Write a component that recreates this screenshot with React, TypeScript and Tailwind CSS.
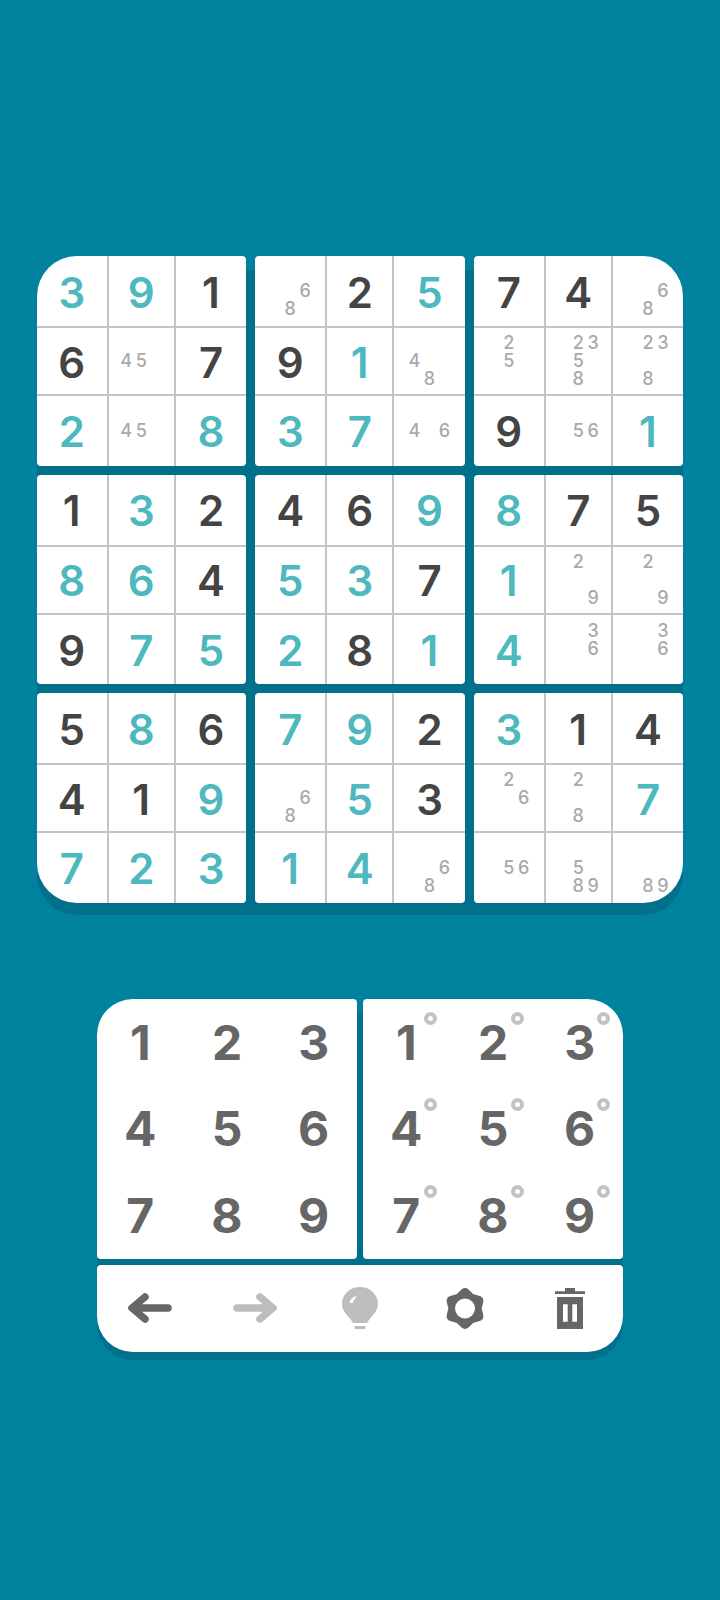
const boxes = [
  ["3t", "9t", "1", "6", "n45", "7", "2t", "n45", "8t"],
  ["n68", "2", "5t", "9", "1t", "n48", "3t", "7t", "n46"],
  ["7", "4", "n68", "n25", "n2358", "n238", "9", "n56", "1t"],
  ["1", "3t", "2", "8t", "6t", "4", "9", "7t", "5t"],
  ["4", "6", "9t", "5t", "3t", "7", "2t", "8", "1t"],
  ["8t", "7", "5", "1t", "n29", "n29", "4t", "n36", "n36"],
  ["5", "8t", "6", "4", "1", "9t", "7t", "2t", "3t"],
  ["7t", "9t", "2", "n68", "5t", "3", "1t", "4t", "n68"],
  ["3t", "1", "4", "n26", "n28", "7t", "n56", "n589", "n89"],
];

const corners: Record<number, string> = {
  0: "rounded-tl-[40px]",
  2: "rounded-tr-[40px]",
  6: "rounded-bl-[40px]",
  8: "rounded-br-[40px]",
};

const digits = ["1", "2", "3", "4", "5", "6", "7", "8", "9"];

function Cell({ value, index }: { value: string; index: number }) {
  const lines = `${index % 3 !== 2 ? "border-r-2" : ""} ${index < 6 ? "border-b-2" : ""}`;

  if (value.startsWith("n")) {
    return (
      <div className={`flex items-center justify-center border-[#c4c4c4] ${lines}`}>
        <div className="grid grid-cols-[15px_15px_15px] grid-rows-[18px_18px_18px] text-[18px] font-medium leading-[18px] text-[#a9a9a9]">
          {digits.map((d) => (
            <span key={d} className="text-center">
              {value.includes(d) ? d : ""}
            </span>
          ))}
        </div>
      </div>
    );
  }

  return (
    <div
      className={`flex items-center justify-center border-[#c4c4c4] pt-[3px] text-[42px] font-semibold leading-none ${lines} ${
        value.endsWith("t") ? "text-[#4db8bd]" : "text-[#444444]"
      }`}
    >
      {value[0]}
    </div>
  );
}

function Board() {
  return (
    <div className="grid w-[646.5px] grid-cols-3 gap-[9px] rounded-[40px] bg-[linear-gradient(to_bottom,transparent_14px,#00708b_14px)] shadow-[0_12px_0_#00708b]">
      {boxes.map((box, i) => (
        <div
          key={i}
          className={`grid h-[209.5px] grid-cols-[72px_67px_1fr] grid-rows-[72px_68px_1fr] overflow-hidden rounded-[4px] bg-white ${corners[i] ?? ""}`}
        >
          {box.map((value, j) => (
            <Cell key={j} value={value} index={j} />
          ))}
        </div>
      ))}
    </div>
  );
}

function NumberPad({ notes }: { notes?: boolean }) {
  return (
    <div
      className={`grid h-[260px] grid-cols-3 grid-rows-3 rounded-[4px] bg-white ${
        notes ? "rounded-tr-[36px]" : "rounded-tl-[36px]"
      }`}
    >
      {digits.map((d) => (
        <div key={d} className="relative flex items-center justify-center pt-[2px] text-[48px] font-bold leading-none text-[#666666]">
          {d}
          {notes && (
            <span className="absolute left-[61px] top-[13px] h-[13px] w-[13px] rounded-full border-[4px] border-[#c2c2c2]" />
          )}
        </div>
      ))}
    </div>
  );
}

function ArrowIcon({ right }: { right?: boolean }) {
  return (
    <svg width="44" height="30" viewBox="0 0 44 30" fill="none" stroke={right ? "#bdbdbd" : "#666666"} strokeWidth="7.5" strokeLinecap="round" strokeLinejoin="round">
      {right ? <path d="M4 15H39M27 4L40 15L27 26" /> : <path d="M40 15H5M17 4L4 15L17 26" />}
    </svg>
  );
}

function BulbIcon() {
  return (
    <svg width="36" height="43" viewBox="0 0 36 43">
      <path d="M18 0C28 0 36 7.5 36 17C36 25 29 29 25 36H11C7 29 0 25 0 17C0 7.5 8 0 18 0Z" fill="#bdbdbd" />
      <rect x="12.5" y="39" width="11" height="3" rx="1" fill="#bdbdbd" />
      <path d="M7.5 15C8.5 12 11 9.5 15 9C13.5 11 12 13 11 15.5C10 16.5 7.5 16.5 7.5 15Z" fill="white" />
    </svg>
  );
}

function GearIcon() {
  return (
    <svg width="38" height="41" viewBox="0 0 38 41">
      <path
        d="M19 5L24.75 10.54L32.4 12.75L30.5 20.5L32.4 28.25L24.75 30.46L19 36L13.25 30.46L5.6 28.25L7.5 20.5L5.6 12.75L13.25 10.54Z"
        fill="#666666"
        stroke="#666666"
        strokeWidth="10"
        strokeLinejoin="round"
      />
      <circle cx="19" cy="20.5" r="10" fill="white" />
    </svg>
  );
}

function TrashIcon() {
  return (
    <svg width="30" height="41" viewBox="0 0 30 41" fill="#666666">
      <path d="M10 0H20V3.3H30V6H0V3.3H10Z" />
      <path fillRule="evenodd" d="M2 9H28V41H2ZM8 16.3V33.7H12.7V16.3ZM17.3 16.3V33.7H22V16.3Z" />
    </svg>
  );
}

export default function App() {
  return (
    <div className="flex h-[1600px] flex-col items-center bg-[#00829f] pt-[256px] font-['Inter',sans-serif]">
      <Board />
      <div className="mt-[96px] w-[526px] rounded-b-[36px] rounded-t-[36px] bg-[linear-gradient(to_bottom,transparent_14px,#00708b_14px)] shadow-[0_8px_0_#00708b]">
        <div className="grid grid-cols-2 gap-[6px]">
          <NumberPad />
          <NumberPad notes />
        </div>
        <div className="mt-[6px] grid h-[87px] grid-cols-5 place-items-center rounded-[4px] rounded-b-[36px] bg-white">
          <ArrowIcon />
          <ArrowIcon right />
          <BulbIcon />
          <GearIcon />
          <TrashIcon />
        </div>
      </div>
    </div>
  );
}
